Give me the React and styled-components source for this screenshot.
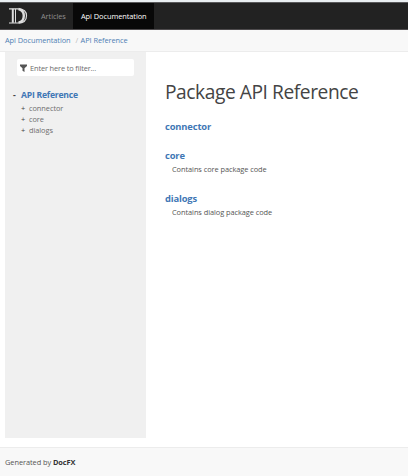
import React from 'react';
import styled, { createGlobalStyle } from 'styled-components';

const GlobalStyle = createGlobalStyle`
  * { box-sizing: border-box; }
  body {
    margin: 0;
    background: #fff;
    color: #4a4a4a;
    font-family: "Open Sans", "Noto Sans", sans-serif;
    font-size: 7.4px;
    letter-spacing: -0.06px;
  }
  a { color: inherit; text-decoration: none; }
`;

const Page = styled.div`
  display: flex;
  flex-direction: column;
  width: 408px;
  height: 476px;
  overflow: hidden;
  border-top: 2px solid #eaeff2;
`;

const Navbar = styled.header`
  display: flex;
  height: 28px;
  flex: none;
  background: #222;
  border-top: 1px solid #59595b;
  border-bottom: 1px solid #4e4b4d;
`;

const Brand = styled.a`
  display: flex;
  width: 33px;
  padding: 4px 0 0 8px;
`;

const NavLink = styled.a`
  height: 26px;
  width: ${(p) => p.$width}px;
  padding-left: 8px;
  line-height: 26px;
  white-space: nowrap;
  color: ${(p) => (p.$active ? '#fff' : '#8f8f8f')};
  background: ${(p) => (p.$active ? '#080808' : 'transparent')};
`;

const Breadcrumb = styled.nav`
  display: flex;
  flex: none;
  height: 22px;
  padding-left: 5px;
  line-height: 21px;
  color: #4f80b4;
  background: #f8f8f8;
  border-bottom: 1px solid #ececec;
`;

const Separator = styled.span`
  width: 10px;
  padding-left: 5px;
  color: #bbb;
`;

const Body = styled.div`
  display: flex;
  flex: none;
  height: 386px;
  padding-left: 5px;
`;

const Sidebar = styled.aside`
  width: 141px;
  padding: 7px 12px 0;
  background: #f0f0f0;
`;

const Filter = styled.label`
  display: flex;
  align-items: center;
  height: 17px;
  padding: 0 0 0 3px;
  gap: 3px;
  border-radius: 2px;
  background: #fff;
  color: #6c6c6c;
  letter-spacing: -0.13px;
`;

const TreeRoot = styled.div`
  display: flex;
  height: 12px;
  margin-top: 13px;
  margin-left: -4px;
  line-height: 12px;
  font-size: 8.6px;
  letter-spacing: -0.22px;
  font-weight: 700;
  color: #3f77b5;
`;

const TreeMark = styled.span`
  width: 8px;
  color: #444;
`;

const TreeList = styled.ul`
  margin: 2px 0 0 4px;
  padding: 0;
  list-style: none;
`;

const TreeItem = styled.li`
  display: flex;
  height: 10.8px;
  line-height: 10.8px;
  color: #6e6e6e;
`;

const Article = styled.main`
  padding: 26px 0 0 19px;
`;

const Title = styled.h1`
  margin: 0 0 15px;
  height: 27px;
  line-height: 27px;
  font-size: 19.2px;
  font-weight: 400;
  white-space: nowrap;
  letter-spacing: -0.44px;
  color: #444;
`;

const Package = styled.section`
  height: ${(p) => p.$height}px;
`;

const PackageName = styled.h2`
  margin: 0;
  height: 13px;
  line-height: 13px;
  font-size: 9.4px;
  letter-spacing: -0.15px;
  font-weight: 700;
  color: #3f77b5;
`;

const PackageText = styled.p`
  margin: 0 0 0 7px;
  line-height: 15px;
  color: #555;
`;

const Footer = styled.footer`
  flex: 1;
  margin-top: 9px;
  padding: 9px 0 0 5px;
  line-height: 10px;
  color: #555;
  background: #f8f8f8;
  border-top: 1px solid #ececec;
`;

const DocName = styled.strong`
  color: #333;
`;

const Logo = () => (
  <svg width="20" height="18" viewBox="0 0 20 18" fill="none" stroke="#ddd">
    <path d="M1 1.800h9c6 0 8.500 3 8.500 6.900s-2.500 7.300-8.500 7.300H1" strokeWidth="1.200" />
    <path d="M4.800 1.800v14" strokeWidth="2" />
    <path d="M7.500 1.800v14" strokeWidth="1" />
    <path d="M10.500 2c4 1 5.300 3.200 5.300 6.700s-1.300 6.100-5.300 7" strokeWidth="2.400" />
  </svg>
);

const FilterIcon = () => (
  <svg width="7" height="8" viewBox="0 0 7 8" fill="#555">
    <path d="M0 .5h7v1.500L4.500 4.200V8l-2-1.200V4.200L0 2z" />
  </svg>
);

const packages = [
  { name: 'connector', height: 29 },
  { name: 'core', text: 'Contains core package code', height: 43 },
  { name: 'dialogs', text: 'Contains dialog package code', height: 43 },
];

export default function App() {
  return (
    <Page>
      <GlobalStyle />
      <Navbar>
        <Brand href="#"><Logo /></Brand>
        <NavLink href="#" $width={40}>Articles</NavLink>
        <NavLink href="#" $width={81} $active>Api Documentation</NavLink>
      </Navbar>
      <Breadcrumb>
        <a href="#">Api Documentation</a>
        <Separator>/</Separator>
        <a href="#">API Reference</a>
      </Breadcrumb>
      <Body>
        <Sidebar>
          <Filter><FilterIcon />Enter here to filter...</Filter>
          <TreeRoot><TreeMark>-</TreeMark><a href="#">API Reference</a></TreeRoot>
          <TreeList>
            {packages.map((p) => (
              <TreeItem key={p.name}><TreeMark>+</TreeMark><a href="#">{p.name}</a></TreeItem>
            ))}
          </TreeList>
        </Sidebar>
        <Article>
          <Title>Package API Reference</Title>
          {packages.map((p) => (
            <Package key={p.name} $height={p.height}>
              <PackageName><a href="#">{p.name}</a></PackageName>
              {p.text && <PackageText>{p.text}</PackageText>}
            </Package>
          ))}
        </Article>
      </Body>
      <Footer>Generated by <DocName>DocFX</DocName></Footer>
    </Page>
  );
}
